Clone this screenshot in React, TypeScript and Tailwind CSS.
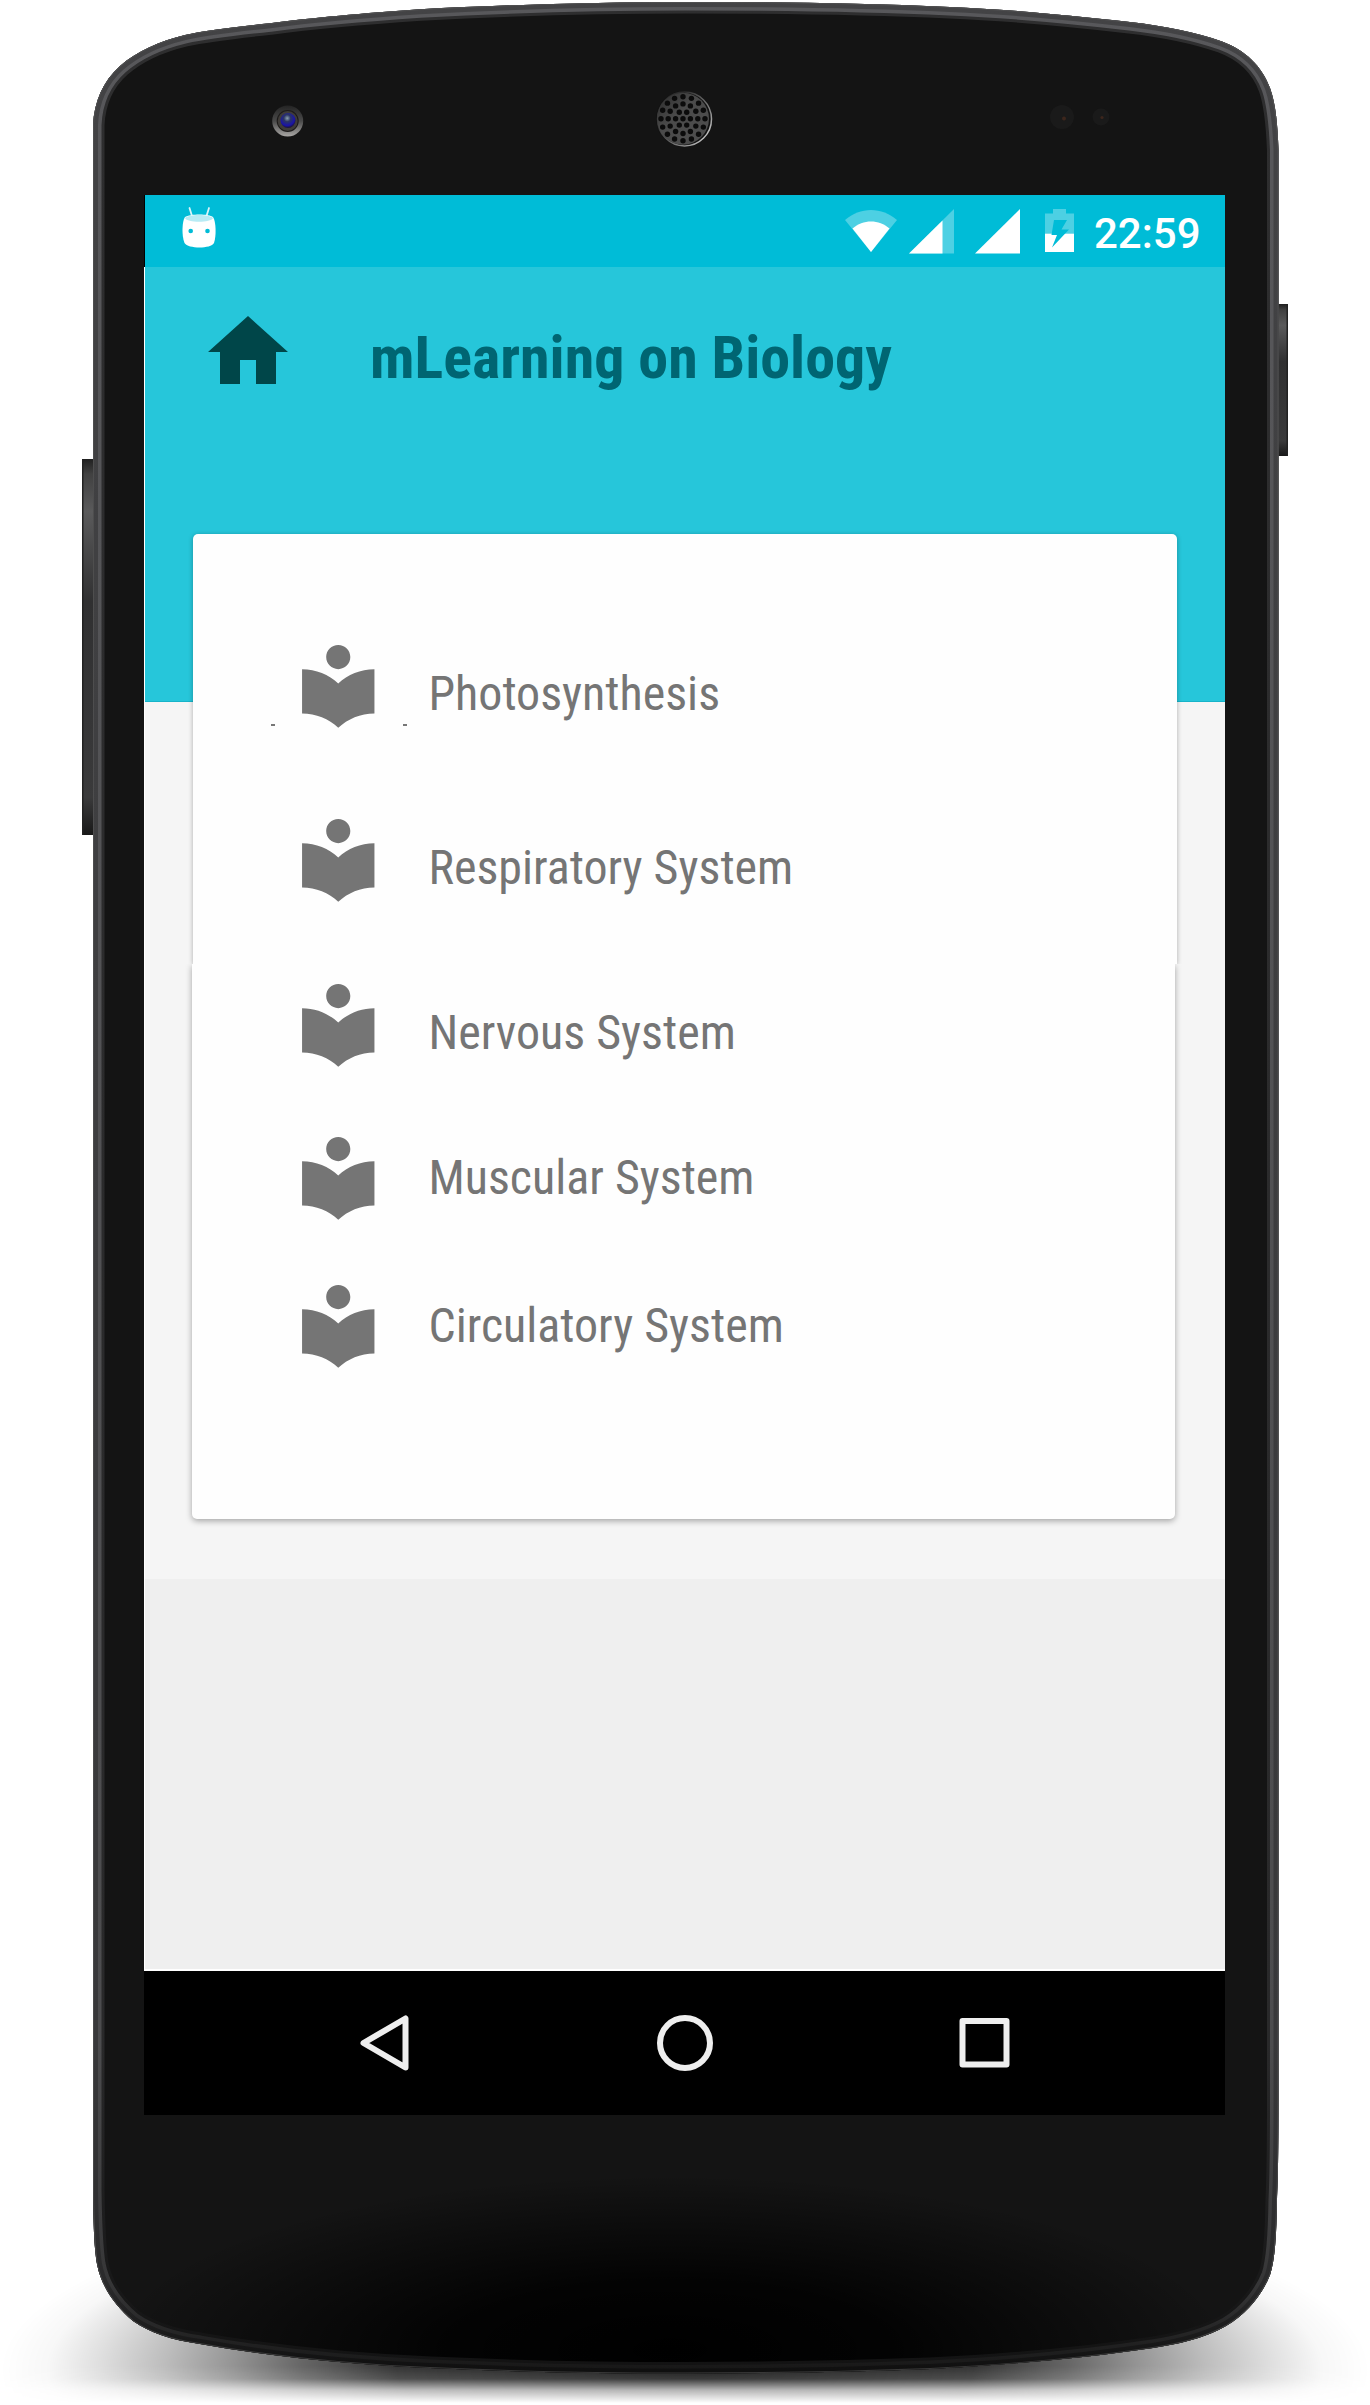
import React from "react";

const BODY =
  "M685 2C600 2 500 5 420 9.3C365 13 310 18 270 23.3C235 27 203 31 185 35C160 41 137 51 120 66C103 81 94 102 93 125L93 2190C93.500 2225 94 2245 97 2264C101 2286 115 2306 133 2321C150 2333 172 2340 200 2344C280 2358 360 2365 430 2368C520 2372 600 2373.500 685 2373.500C770 2373.500 850 2372 930 2369C990 2366 1080 2359 1153 2348C1185 2343 1206 2337 1226 2326C1248 2313 1263 2293 1270 2275C1275 2260 1276.500 2235 1277 2200C1278 2180 1278.500 2150 1278.500 2100L1278.500 150C1277.500 125 1276 105 1270 88C1262 66 1245 50 1222 41.500C1195 32 1165 26 1130 22C1060 14 1000 9 950 7C860 3 770 2 685 2Z";

function ring(count: number, radius: number, start: number) {
  return Array.from({ length: count }, (_, i) => {
    const a = ((start + (360 / count) * i) * Math.PI) / 180;
    return { x: 683 + radius * Math.sin(a), y: 118.7 - radius * Math.cos(a) };
  });
}

const HOLES = [{ x: 683, y: 118.7 }, ...ring(6, 7.4, 30), ...ring(12, 14.8, 0), ...ring(16, 22, 0)];

function PhoneBody() {
  return (
    <svg className="absolute inset-0" width="1370" height="2405" viewBox="0 0 1370 2405" aria-hidden="true">
      <defs>
        <clipPath id="bodyClip">
          <path d={BODY} />
        </clipPath>
        <radialGradient id="floor" gradientUnits="userSpaceOnUse" cx="0" cy="0" r="1" gradientTransform="translate(685 2370) scale(685 190)">
          <stop offset="0" stopOpacity=".9" />
          <stop offset=".42" stopOpacity=".8" />
          <stop offset=".56" stopOpacity=".6" />
          <stop offset=".66" stopOpacity=".42" />
          <stop offset=".76" stopOpacity=".26" />
          <stop offset=".86" stopOpacity=".12" />
          <stop offset=".93" stopOpacity=".03" />
          <stop offset="1" stopOpacity="0" />
        </radialGradient>
        <linearGradient id="fade" gradientUnits="userSpaceOnUse" x1="0" y1="2366" x2="0" y2="2403">
          <stop offset="0" stopColor="#fff" />
          <stop offset=".35" stopColor="#ddd" />
          <stop offset=".65" stopColor="#555" />
          <stop offset="1" stopColor="#000" />
        </linearGradient>
        <mask id="floorMask" maskUnits="userSpaceOnUse" x="0" y="2100" width="1370" height="305">
          <rect x="0" y="2100" width="1370" height="305" fill="url(#fade)" />
        </mask>
        <radialGradient id="dark" gradientUnits="userSpaceOnUse" cx="0" cy="0" r="1" gradientTransform="translate(670 2350) scale(560 175)">
          <stop offset="0" stopColor="#000" />
          <stop offset=".4" stopColor="#000" stopOpacity=".85" />
          <stop offset="1" stopColor="#000" stopOpacity="0" />
        </radialGradient>
        <linearGradient id="rimA" x1="0" y1="0" x2="0" y2="2405" gradientUnits="userSpaceOnUse">
          <stop offset="0" stopColor="#2e2e2f" />
          <stop offset=".85" stopColor="#29292a" />
          <stop offset="1" stopColor="#101010" />
        </linearGradient>
        <linearGradient id="rimB" x1="0" y1="0" x2="0" y2="2405" gradientUnits="userSpaceOnUse">
          <stop offset="0" stopColor="#58585b" />
          <stop offset=".85" stopColor="#4c4c4e" />
          <stop offset=".95" stopColor="#363637" />
          <stop offset=".985" stopColor="#181818" />
        </linearGradient>
        <linearGradient id="rimC" x1="0" y1="0" x2="0" y2="2405" gradientUnits="userSpaceOnUse">
          <stop offset="0" stopColor="#434345" />
          <stop offset=".85" stopColor="#38383a" />
          <stop offset=".95" stopColor="#2a2a2b" />
          <stop offset=".985" stopColor="#101010" />
        </linearGradient>
        <linearGradient id="key" x1="0" y1="0" x2="0" y2="1">
          <stop offset="0" stopColor="#202020" />
          <stop offset=".04" stopColor="#414141" />
          <stop offset=".14" stopColor="#5a5a5b" />
          <stop offset=".38" stopColor="#303031" />
          <stop offset=".9" stopColor="#3a3a3b" />
          <stop offset="1" stopColor="#181818" />
        </linearGradient>
        <linearGradient id="camRing" x1="0" y1="0" x2="0" y2="1">
          <stop offset="0" stopColor="#242424" />
          <stop offset=".5" stopColor="#4a4a4a" />
          <stop offset="1" stopColor="#a8a6a4" />
        </linearGradient>
        <radialGradient id="lens" cx=".45" cy=".35" r=".65">
          <stop offset="0" stopColor="#8ba0ae" />
          <stop offset=".35" stopColor="#2b3563" />
          <stop offset=".75" stopColor="#1a14a8" />
          <stop offset="1" stopColor="#1c1430" />
        </radialGradient>
        <linearGradient id="grille" x1="0" y1="0" x2="1" y2="1">
          <stop offset="0" stopColor="#2a2a2a" />
          <stop offset=".4" stopColor="#4a4a4a" />
          <stop offset="1" stopColor="#4e4e4e" />
        </linearGradient>
        <linearGradient id="grilleEdge" x1="0" y1="0" x2="1" y2=".8">
          <stop offset=".3" stopColor="#2c2c2c" />
          <stop offset=".8" stopColor="#8c8c8c" />
          <stop offset="1" stopColor="#d0d0d0" />
        </linearGradient>
      </defs>

      <rect x="0" y="2150" width="1370" height="255" fill="url(#floor)" mask="url(#floorMask)" />

      <rect x="82" y="459" width="14" height="376" fill="url(#key)" />
      <rect x="82" y="459" width="1.500" height="376" fill="#222" />
      <rect x="1276" y="304" width="12" height="152" fill="url(#key)" />
      <rect x="1286.500" y="304" width="1.500" height="152" fill="#222" />

      <g clipPath="url(#bodyClip)">
        <path d={BODY} fill="#141414" />
        <rect x="93" y="2120" width="1186" height="260" fill="url(#dark)" />
        <path d={BODY} fill="none" stroke="url(#rimA)" strokeWidth="23" />
        <path d={BODY} fill="none" stroke="url(#rimB)" strokeWidth="17" />
        <path d={BODY} fill="none" stroke="url(#rimC)" strokeWidth="10" />
        <path d={BODY} fill="none" stroke="#5a5a5a" strokeOpacity=".55" strokeWidth="2" />
      </g>

      <circle cx="287.700" cy="121" r="15.500" fill="url(#camRing)" />
      <circle cx="287.700" cy="121" r="11" fill="#1d1b1a" />
      <circle cx="287.700" cy="121" r="10" fill="#3f3c39" />
      <circle cx="288" cy="120.500" r="7.500" fill="url(#lens)" />

      <circle cx="684" cy="119" r="28" fill="#111" />
      <circle cx="684.500" cy="119" r="27" fill="none" stroke="url(#grilleEdge)" strokeWidth="1.500" />
      <circle cx="683" cy="118.700" r="26" fill="url(#grille)" />
      {HOLES.map((h, i) => (
        <circle key={i} cx={h.x} cy={h.y} r="2.700" fill="#0b0b0b" />
      ))}

      <circle cx="1062" cy="117" r="12" fill="#1a1a1a" />
      <circle cx="1064" cy="118.500" r="2" fill="#3d261c" />
      <circle cx="1101" cy="117" r="8.500" fill="#1a1a1a" />
      <circle cx="1102" cy="117.500" r="1.600" fill="#3d261c" />
    </svg>
  );
}

function StatusBar() {
  return (
    <div className="flex h-[72px] items-start bg-[#00bcd7] text-white">
      <svg className="ml-[36px] mt-[11px]" width="36" height="43" viewBox="0 0 36 43">
        <path d="M8.500 2l2.500 8M28 2l-2.500 8" stroke="#d9f4f9" strokeWidth="1.800" strokeLinecap="round" />
        <path d="M4 11C9 7.500 28 7.500 32 11C35 15 35.500 30 33 37C30 43 7 43 3.500 37C.5 30 1 15 4 11Z" fill="#fff" />
        <path d="M4 12C8 8 28 8 32 12C30 17 6 17 4 12Z" fill="#b8ebf4" />
        <circle cx="9.700" cy="25" r="2.300" fill="#00bcd7" />
        <circle cx="26.500" cy="25" r="2.300" fill="#00bcd7" />
      </svg>
      <svg className="ml-auto mt-[14px]" width="52" height="44" viewBox="0 0 52 44">
        <path d="M26 43L0 11C15-2.500 37-2.500 52 11Z" fill="#4dd0e3" />
        <path d="M26 43L7.500 19.500C18 10 34 10 44.500 19.500Z" fill="#fff" />
      </svg>
      <svg className="ml-[12px] mt-[14px]" width="45" height="45" viewBox="0 0 45 45">
        <path d="M0 44.500L45 0V44.500Z" fill="#4dd0e3" />
        <path d="M0 44.500L33.500 11.400V44.500Z" fill="#fff" />
      </svg>
      <svg className="ml-[21px] mt-[14px]" width="45" height="45" viewBox="0 0 45 45">
        <path d="M0 44.500L45 0V44.500Z" fill="#fff" />
      </svg>
      <svg className="ml-[25px] mt-[14px]" width="29" height="44" viewBox="0 0 29 44">
        <path d="M8 0H21V4.500H29V25H0V4.500H8Z" fill="#4dd0e3" />
        <path d="M0 24.700H29V43H0Z" fill="#fff" />
        <path d="M9 11H22L16.500 20.500H24L7 38.500L12 26H6.500Z" fill="#00bcd7" />
      </svg>
      <div className="ml-[20px] mt-[14px] w-[131px] text-[42px] font-medium leading-[50px] whitespace-nowrap">22:59</div>
    </div>
  );
}

function BookIcon() {
  return (
    <svg className="size-[96.500px] shrink-0" viewBox="0 0 24 24" fill="#757575">
      <path d="M12 11.550C9.640 9.350 6.480 8 3 8v11c3.480 0 6.640 1.350 9 3.550 2.360-2.190 5.520-3.550 9-3.550V8c-3.480 0-6.640 1.350-9 3.550zM12 8c1.660 0 3-1.340 3-3s-1.340-3-3-3-3 1.340-3 3 1.340 3 3 3z" />
    </svg>
  );
}

function Topic({ label, className, textClass }: { label: string; className: string; textClass: string }) {
  return (
    <div className={`flex h-[96px] items-start ${className}`}>
      <BookIcon />
      <span
        className={`ml-[42px] whitespace-nowrap font-['Roboto_Condensed','Roboto',sans-serif] text-[48px] leading-[56px] text-[#757575] [font-stretch:75%] ${textClass}`}
      >
        {label}
      </span>
    </div>
  );
}

export default function App() {
  return (
    <div className="relative h-[2405px] w-[1370px] overflow-hidden bg-white font-['Roboto',sans-serif]">
      <PhoneBody />
      <div className="relative ml-[144px] mt-[195px] flex h-[1920px] w-[1081px] flex-col">
        <div className="border-l border-black">
          <StatusBar />
        </div>
        <main className="flex h-[1704px] flex-col border-l border-white bg-[#efefef]">
          <header className="flex h-[435px] shrink-0 items-start border-b border-[#17b4c9] bg-[#26c6da]">
            <svg className="ml-[55px] mt-[37px] size-[96px]" viewBox="0 0 24 24" fill="#004649">
              <path d="M10 20v-6h4v6h5v-8h3L12 3 2 12h3v8z" />
            </svg>
            <h1 className="ml-[74px] mt-[55px] whitespace-nowrap font-['Roboto_Condensed','Roboto',sans-serif] text-[60px] font-bold leading-[72px] text-[#006572] [font-stretch:75%]">
              mLearning on Biology
            </h1>
          </header>
          <div className="h-[877px] shrink-0 bg-[#f5f5f5]">
            <section className="-mt-[168px] flex flex-col">
              <div className="relative ml-[48px] flex h-[430px] w-[984px] flex-col rounded-t-[5px] bg-[#fefefe] pl-[97px] pt-[102.500px] shadow-[0_1px_5px_rgba(0,0,0,0.3)] [clip-path:inset(-8px_-8px_0_-8px)]">
                <Topic label="Photosynthesis" className="" textClass="mt-[29px]" />
                <Topic label="Respiratory System" className="mt-[78px]" textClass="mt-[29px]" />
                <span className="absolute left-[78px] top-[190px] h-[2px] w-[4px] bg-[#777]" />
                <span className="absolute left-[210px] top-[190px] h-[2px] w-[4px] bg-[#777]" />
              </div>
              <div className="relative ml-[47px] flex h-[555px] w-[983px] flex-col rounded-b-[5px] bg-[#fefefe] pl-[98px] pt-[11.500px] shadow-[0_2px_6px_rgba(0,0,0,0.34)] [clip-path:inset(0_-10px_-12px_-10px)]">
                <Topic label="Nervous System" className="" textClass="mt-[29px]" />
                <Topic label="Muscular System" className="mt-[57px]" textClass="mt-[21px]" />
                <Topic label="Circulatory System" className="mt-[52.500px]" textClass="mt-[20.500px]" />
              </div>
            </section>
          </div>
          <div className="mt-auto h-[2px] bg-white" />
        </main>
        <nav className="flex h-[144px] items-start bg-black">
          <svg className="ml-[215px] mt-[43px]" width="52" height="58" viewBox="0 0 52 58" fill="none" stroke="#eee" strokeWidth="6" strokeLinejoin="round">
            <path d="M46.500 4.500V53.500L4.500 29Z" />
          </svg>
          <svg className="ml-[244.500px] mt-[43px]" width="58" height="58" viewBox="0 0 58 58" fill="none" stroke="#eee" strokeWidth="6">
            <circle cx="29" cy="29" r="25" />
          </svg>
          <svg className="ml-[244.500px] mt-[45px]" width="54" height="54" viewBox="0 0 54 54" fill="none" stroke="#eee" strokeWidth="6" strokeLinejoin="round">
            <rect x="4.500" y="5" width="44" height="43.500" />
          </svg>
        </nav>
      </div>
    </div>
  );
}
